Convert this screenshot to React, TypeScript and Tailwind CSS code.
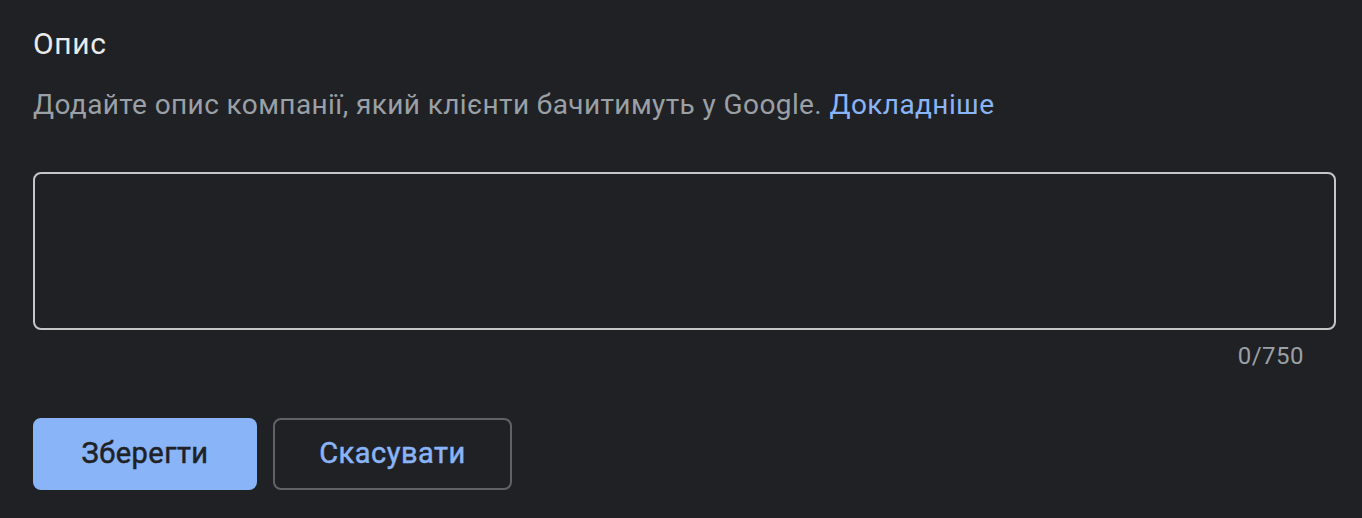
export default function App() {
  return (
    <div className="min-h-[518px] w-full bg-[#202124] px-[33px] pt-[26px] font-['Roboto','Liberation_Sans',sans-serif]">
      <h2 className="text-[30px] leading-[36px] font-normal tracking-[0.7px] text-[#e8eaed]">Опис</h2>

      <p className="mt-[25px] text-[28px] leading-[36px] tracking-[0.4px] text-[#9aa0a6]">
        Додайте опис компанії, який клієнти бачитимуть у Google.{' '}
        <a href="#" className="text-[#8ab4f8]">
          Докладніше
        </a>
      </p>

      <div className="mt-[49px] w-[1303px]">
        <textarea
          className="block h-[158px] w-full resize-none rounded-[8px] border-2 border-[#c4c7c5] bg-transparent outline-none"
          aria-label="Опис"
        />
        <div className="mt-[12px] pr-[32px] text-right text-[24px] leading-[28px] tracking-[0.5px] text-[#9aa0a6]">
          0/750
        </div>
      </div>

      <div className="mt-[48px] flex gap-4">
        <button className="h-[72px] w-[224px] rounded-[8px] bg-[#8ab4f8] text-[29px] font-normal tracking-[0.5px] text-[#202124] [-webkit-text-stroke:0.5px_#202124]">
          Зберегти
        </button>
        <button className="h-[72px] w-[239px] rounded-[8px] border-2 border-[#5f6368] text-[29px] font-normal tracking-[0.5px] text-[#8ab4f8] [-webkit-text-stroke:0.5px_#8ab4f8]">
          Скасувати
        </button>
      </div>
    </div>
  )
}
